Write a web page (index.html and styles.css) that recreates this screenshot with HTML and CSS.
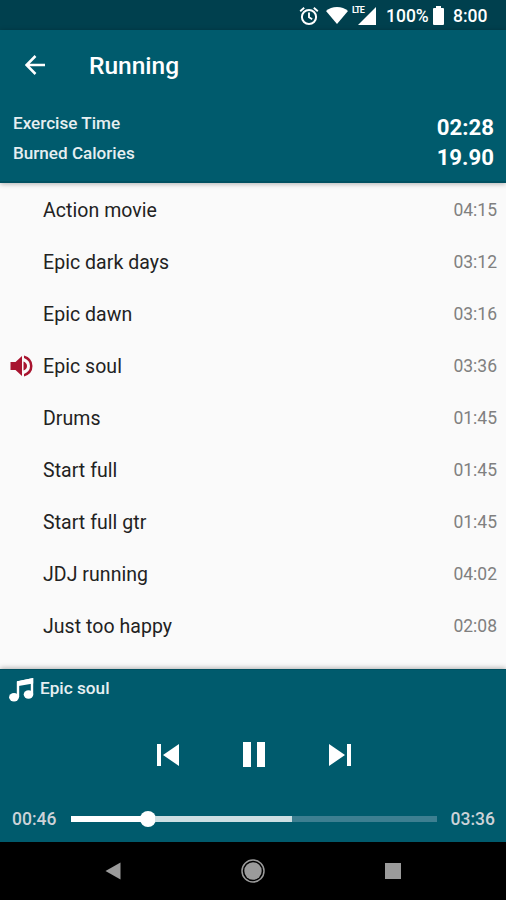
FILE: index.html
```html
<!DOCTYPE html>
<html lang="en">
<head>
<meta charset="utf-8">
<title>Running</title>
<link rel="stylesheet" href="styles.css">
</head>
<body>
<div class="screen">
  <div class="status">
    <svg class="alarm" width="20" height="20" viewBox="0 0 20 20" fill="none" stroke="#fff"><circle cx="10" cy="11" r="7.1" stroke-width="2"/><path d="M10 6.500v4.800l3.200 2M1.200 5.200l4-3.400M18.800 5.200l-4-3.400" stroke-width="1.900"/></svg>
    <svg class="wifi" width="22" height="17" viewBox="0 0 22 17" fill="#fff"><path d="M11 17 0 4Q4.500 0 11 0t11 4Z"/></svg>
    <span class="signal"><b>LTE</b><svg width="18" height="18" viewBox="0 0 18 18" fill="#fff"><path d="M0 18 18 0v18Z"/></svg></span>
    <span class="percent">100%</span>
    <svg class="battery" width="11" height="19" viewBox="0 0 11 19" fill="#fff"><path d="M3 0h5v2h2q1 0 1 1v15q0 1-1 1H1q-1 0-1-1V3q0-1 1-1h2Z"/></svg>
    <span class="clock">8:00</span>
  </div>
  <header class="header">
    <div class="toolbar">
      <svg class="back" width="20" height="20" viewBox="0 0 20 20" fill="none" stroke="#fff" stroke-width="2.500"><path d="M20 10H2M10.500 1 1.600 10l8.900 9"/></svg>
      <h1>Running</h1>
    </div>
    <div class="stat"><span>Exercise Time</span><strong>02:28</strong></div>
    <div class="stat"><span>Burned Calories</span><strong>19.90</strong></div>
  </header>
  <main class="list">
    <div class="row"><i></i><span>Action movie</span><time>04:15</time></div>
    <div class="row"><i></i><span>Epic dark days</span><time>03:12</time></div>
    <div class="row"><i></i><span>Epic dawn</span><time>03:16</time></div>
    <div class="row"><i><svg width="23" height="22" viewBox="0 0 23 22" fill="#a8142f"><path d="M.5 7h5L12 1v20l-6.500-6H.5ZM13.500 6.500q3.500 1.500 3.500 4.500t-3.500 4.500ZM14 .5Q22.500 3 22.500 11T14 21.500v-2.600Q20 16.500 20 11t-6-7.900Z"/></svg></i><span>Epic soul</span><time>03:36</time></div>
    <div class="row"><i></i><span>Drums</span><time>01:45</time></div>
    <div class="row"><i></i><span>Start full</span><time>01:45</time></div>
    <div class="row"><i></i><span>Start full gtr</span><time>01:45</time></div>
    <div class="row"><i></i><span>JDJ running</span><time>04:02</time></div>
    <div class="row"><i></i><span>Just too happy</span><time>02:08</time></div>
  </main>
  <footer class="player">
    <div class="now">
      <svg width="25" height="24" viewBox="0 0 25 24"><path d="M9 19V4.500L23 1.500V16" fill="none" stroke="#fff" stroke-width="2.400"/><path d="M8 3.200 24.200 0v5.500L8 8.200Z" fill="#fff"/><ellipse cx="5" cy="19.200" rx="4.900" ry="4.200" fill="#fff"/><ellipse cx="19.500" cy="16.500" rx="4.800" ry="4.200" fill="#fff"/></svg>
      <span>Epic soul</span>
    </div>
    <div class="controls">
      <svg width="22" height="22" viewBox="0 0 22 22" fill="#fff"><path d="M0 0h4v22H0ZM22 0v22L6 11Z"/></svg>
      <svg width="22" height="25" viewBox="0 0 22 25" fill="#fff"><path d="M0 0h8v25H0ZM14 0h8v25h-8Z"/></svg>
      <svg width="22" height="22" viewBox="0 0 22 22" fill="#fff"><path d="M18 0h4v22h-4ZM0 0v22l16-11Z"/></svg>
    </div>
    <div class="progress">
      <span>00:46</span>
      <div class="track"><div class="played"></div><div class="thumb"></div><div class="buffered"></div></div>
      <span>03:36</span>
    </div>
  </footer>
  <nav class="nav">
    <svg width="16" height="18" viewBox="0 0 16 18"><path d="M15.500.5v17L.5 9Z" fill="#9b9b9b"/></svg>
    <svg width="24" height="24" viewBox="0 0 24 24"><circle cx="12" cy="12" r="11" fill="none" stroke="#9b9b9b" stroke-width="1.500"/><circle cx="12" cy="12" r="8.700" fill="#9b9b9b"/></svg>
    <svg width="16" height="16" viewBox="0 0 16 16"><path d="M0 0h16v16H0Z" fill="#9b9b9b"/></svg>
  </nav>
</div>
</body>
</html>
```
FILE: styles.css
```css
* { box-sizing: border-box; }
body { margin: 0; font-family: Roboto, sans-serif; }
svg { display: block; flex: none; }
.screen { width: 506px; height: 900px; display: flex; flex-direction: column; overflow: hidden; background: #fafafa; }
.status { height: 30px; flex: none; background: #00404e; color: #fff; display: flex; align-items: center; padding: 1px 0 0 299px; font-size: 17.5px; font-weight: 500; white-space: nowrap; }
.wifi { margin-left: 7px; }
.signal { position: relative; margin-left: 10px; }
.signal b { position: absolute; left: -6px; top: -1px; font-size: 9px; line-height: 9px; font-weight: 700; letter-spacing: -0.8px; }
.percent { margin-left: 10px; width: 43px; }
.battery { margin-left: 4px; }
.clock { margin-left: 9px; }
.header { height: 153px; flex: none; background: #005b6d; color: #fff; border-bottom: 2px solid #005061; box-shadow: 0 1px 5px rgba(0,0,0,.3); z-index: 1; }
.toolbar { height: 79px; display: flex; align-items: center; padding: 0 0 9px 25px; }
.toolbar h1 { margin: 2px 0 0 44px; font-size: 24.5px; font-weight: 500; line-height: 30px; }
.stat { height: 30px; display: flex; justify-content: space-between; padding: 0 12px 0 13px; line-height: 30px; }
.stat span { font-size: 17.1px; font-weight: 500; color: #e6eff1; margin-top: -1px; }
.stat strong { font-size: 22.2px; font-weight: 700; padding-top: 3px; }
.list { flex: 1; padding-top: 1px; }
.row { height: 52px; display: flex; align-items: center; padding: 0 9px 0 10px; }
.row i { width: 33px; }
.row span { flex: 1; font-size: 19.5px; color: #222; letter-spacing: .05px; }
.row time { font-size: 17.5px; color: #808080; }
.player { height: 173px; flex: none; background: #005b6d; color: #fff; border-top: 1px solid #004f5f; box-shadow: 0 -1px 5px rgba(0,0,0,.3); z-index: 1; }
.now { height: 39px; display: flex; align-items: center; padding-left: 9px; gap: 6px; }
.now span { font-size: 17.2px; font-weight: 500; color: #e6eff1; margin-top: -3px; }
.controls { height: 91px; display: flex; align-items: center; justify-content: center; gap: 64px; padding-left: 2px; }
.progress { display: flex; align-items: center; padding: 0 11px 0 12px; height: 38px; font-size: 17.5px; font-weight: 500; color: #ccd2d8; justify-content: space-between; }
.track { width: 366px; height: 6px; display: flex; align-items: center; background: #3d7f91; }
.played { width: 70px; height: 6px; background: #fff; }
.thumb { width: 16px; height: 16px; border-radius: 50%; background: #fff; margin: 0 -1px; }
.buffered { width: 137px; height: 6px; background: #cddfe3; }
.nav { height: 58px; flex: none; background: #000; display: flex; align-items: center; justify-content: center; gap: 120px; }
```
